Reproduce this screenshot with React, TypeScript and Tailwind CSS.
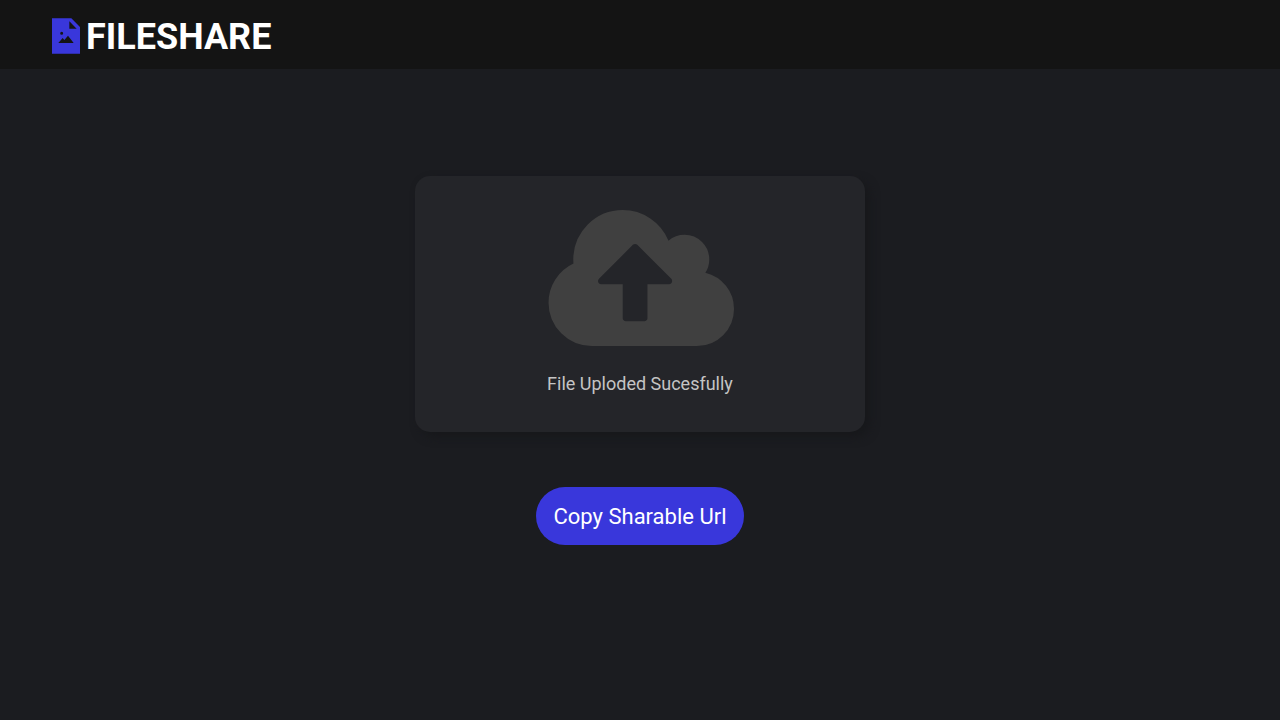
function LogoIcon() {
  return (
    <svg className="h-9 w-7 shrink-0" viewBox="0 0 84 108" fill="#3937db" fillRule="evenodd" aria-hidden="true">
      <path d="M0 1H58L84 27V107H0ZM52 10V32H74ZM33.500 46a4.500 4.500 0 1 0-9 0a4.500 4.500 0 1 0 9 0ZM19 75H65L48 53L37 66L32 60Z" />
    </svg>
  );
}

function CloudUploadIcon() {
  return (
    <svg
      className="h-34 w-47"
      viewBox="0 128 1920 1408"
      preserveAspectRatio="xMaxYMid meet"
      fill="#404040"
      aria-hidden="true"
    >
      <path d="M1280 864q0-14-9-23l-352-352q-9-9-23-9t-23 9l-351 351q-10 12-10 24 0 14 9 23t23 9h224v352q0 13 9.500 22.500t22.500 9.500h192q13 0 22.500-9.500t9.500-22.500v-352h224q13 0 22.500-9.500t9.500-22.500zm640 288q0 159-112.500 271.500t-271.500 112.500h-1088q-185 0-316.500-131.500t-131.500-316.500q0-130 70-240t188-165q-2-30-2-43 0-212 150-362t362-150q156 0 285.500 87t188.500 231q71-62 166-62 106 0 181 75t75 181q0 76-41 138 130 31 213.500 135.500t83.500 238.500z" />
    </svg>
  );
}

export default function App() {
  return (
    <div className="flex min-h-screen flex-col bg-[#1b1c20] font-['Roboto',sans-serif] antialiased">
      <header className="flex items-start gap-1.5 bg-[#141414] px-13 pt-[18px] pb-[13px]">
        <LogoIcon />
        <h1 className="text-4xl leading-[38px] font-bold text-white">FILESHARE</h1>
      </header>
      <main className="flex flex-col items-center px-4 pt-[107px]">
        <section className="flex h-64 w-full max-w-[450px] flex-col items-center gap-6 rounded-[15px] bg-[#242529] pt-[34px] shadow-[5px_5px_10px_#17181b]">
          <CloudUploadIcon />
          <p className="text-lg leading-7 text-[#c4c4c4]">File Uploded Sucesfully</p>
        </section>
        <button
          type="button"
          className="mt-[55px] cursor-pointer rounded-full bg-[#3937db] px-[17px] pt-[13px] pb-[11px] text-[22px] leading-[34px] text-white"
        >
          Copy Sharable Url
        </button>
      </main>
    </div>
  );
}
